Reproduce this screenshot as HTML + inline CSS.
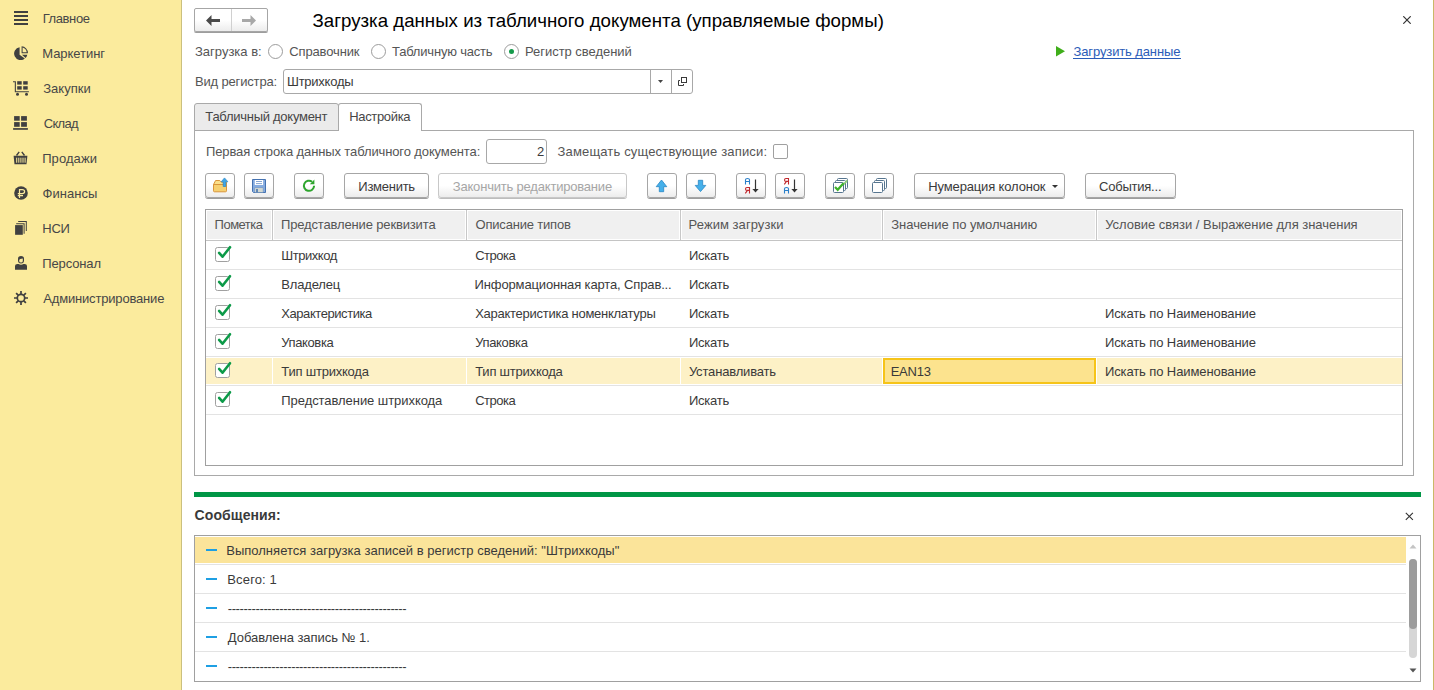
<!DOCTYPE html>
<html><head><meta charset="utf-8">
<style>
*{box-sizing:border-box;margin:0;padding:0}
html,body{width:1434px;height:690px;overflow:hidden;background:#fff}
body{position:relative;font-family:"Liberation Sans",sans-serif;font-size:13px;line-height:15px;color:#555}
.a{position:absolute}
.t{position:absolute;white-space:nowrap;font-size:13px;line-height:15px}
#side{position:absolute;left:0;top:0;width:181px;height:690px;background:#fbeb9d}
#sideb{position:absolute;left:181px;top:0;width:1px;height:690px;background:#cbc07e}
#rb{position:absolute;left:1433px;top:0;width:1px;height:690px;background:#c9b867}
.side .t{color:#474747}
.ico{position:absolute;width:24px;height:24px}
.btn{position:absolute;height:26px;border:1px solid #a6a6a6;border-radius:3px;background:linear-gradient(#fff 0%,#fff 50%,#ececec 100%);box-shadow:0 1px 0 #9d9d9d}
.btn.dis{border-color:#c8c8c8;box-shadow:0 1px 0 #bdbdbd}
.rad{position:absolute;width:15px;height:15px;border:1px solid #9c9c9c;border-radius:50%;background:#fff}
.sep{position:absolute;height:1px;background:#e3e3e3}
</style></head><body>
<div id="side"></div><div id="sideb"></div><div id="rb"></div>
<div class="side">
 <div class="t" style="left:42.7px;top:11px;letter-spacing:-0.400px">Главное</div>
 <div class="t" style="left:42.2px;top:46px;letter-spacing:-0.037px">Маркетинг</div>
 <div class="t" style="left:43.2px;top:81px;letter-spacing:0.033px">Закупки</div>
 <div class="t" style="left:43.7px;top:116px;letter-spacing:-0.675px">Склад</div>
 <div class="t" style="left:42.2px;top:151px;letter-spacing:0.083px">Продажи</div>
 <div class="t" style="left:42.6px;top:186px;letter-spacing:0.033px">Финансы</div>
 <div class="t" style="left:42.2px;top:221px;letter-spacing:-0.200px">НСИ</div>
 <div class="t" style="left:42.2px;top:256px;letter-spacing:-0.114px">Персонал</div>
 <div class="t" style="left:43.3px;top:291px;letter-spacing:-0.181px">Администрирование</div>
</div>

<svg class="a" style="left:14px;top:11px" width="14" height="14"><g fill="#404040"><rect x="0" y="0" width="14" height="2"/><rect x="0" y="4" width="14" height="2"/><rect x="0" y="8" width="14" height="2"/><rect x="0" y="12" width="14" height="2"/></g></svg>
<svg class="a" style="left:14px;top:46px" width="14" height="14" viewBox="0 0 14 14"><g fill="#404040">
<path d="M5.6,1.2 V8.8 L10.8,12.6 A6.5,6.5 0 1 1 5.6,1.2Z"/>
<path d="M8,8.8 H13.3 A6.4,6.4 0 0 1 11.6,12.1Z"/>
<path d="M7.6,0.3 V7.2 H13.9 A6.6,6.6 0 0 0 7.6,0.3Z M8.6,1.5 A5.5,5.5 0 0 1 12.7,6.2 H8.6Z" fill-rule="evenodd"/></g></svg>
<svg class="a" style="left:13px;top:81px" width="16" height="16" viewBox="0 0 16 16"><g fill="#404040">
<path d="M0,0.2 H2.9 V10.2 H15.9 V11.3 H1.8 V1.3 H0Z"/>
<rect x="4.2" y="0.2" width="4.5" height="3.4"/><rect x="10.2" y="0.2" width="4.5" height="3.4"/>
<rect x="4.2" y="5.2" width="4.5" height="3.4"/><rect x="10.2" y="5.2" width="4.5" height="3.4"/>
<circle cx="4.5" cy="13.3" r="1.5"/><circle cx="13.5" cy="13.3" r="1.5"/></g></svg>
<svg class="a" style="left:13px;top:116px" width="16" height="16" viewBox="0 0 16 16"><g fill="#404040">
<rect x="1.1" y="0.1" width="5.6" height="4.6"/><rect x="8.1" y="0.1" width="5.8" height="4.6"/>
<rect x="1.1" y="6.1" width="5.6" height="4.7"/><rect x="8.1" y="6.1" width="5.8" height="4.7"/>
<rect x="0.1" y="12.1" width="14.8" height="1.7"/></g></svg>
<svg class="a" style="left:13px;top:151px" width="16" height="16" viewBox="0 0 16 16"><g fill="none" stroke="#404040">
<path d="M3.5,4.5 L6.2,0.8 M11.5,4.5 L8.8,0.8" stroke-width="1.4"/>
<path d="M0.6,4.8 H14.4 L13.5,13.2 H1.5Z" fill="#404040" stroke="none"/></g>
<g fill="#fbeb9d"><rect x="3.2" y="6.7" width="1" height="5"/><rect x="5.3" y="6.7" width="1" height="5"/><rect x="7.4" y="6.7" width="1" height="5"/><rect x="9.5" y="6.7" width="1" height="5"/><rect x="11.6" y="6.7" width="1" height="5"/></g></svg>
<svg class="a" style="left:14px;top:186px" width="14" height="14" viewBox="0 0 14 14"><circle cx="7" cy="7" r="6.8" fill="#404040"/>
<path d="M5.5,12 V3.6 H8.2 Q10.6,3.6 10.6,5.6 Q10.6,7.6 8.2,7.6 H3.8 M3.8,9.6 H9" fill="none" stroke="#fbeb9d" stroke-width="1.2"/></svg>
<svg class="a" style="left:14px;top:221px" width="14" height="14" viewBox="0 0 14 14"><g fill="#404040">
<rect x="1.1" y="4.1" width="7.7" height="9.7"/>
<path d="M2.2,2.2 H10.6 V12.8 H9.6 V3.2 H2.2Z"/>
<path d="M4.2,0.1 H12.8 V9.9 H11.8 V1.1 H4.2Z"/></g></svg>
<svg class="a" style="left:14px;top:256px" width="14" height="14" viewBox="0 0 14 14"><g fill="#404040">
<path d="M4,2.5 Q4,0 7,0 Q10,0 10,2.5 V4.5 Q10,7.5 7,7.5 Q4,7.5 4,4.5Z"/>
<path d="M1,10 Q1,8 3.5,8 H4.5 Q7,9.5 9.5,8 H10.5 Q13,8 13,10 V13.8 H1Z"/></g>
<path d="M5.2,4.2 Q5.5,2.6 8.8,2.6 V5 Q8.8,6.5 7,6.5 Q5.2,6.5 5.2,5Z" fill="#fbeb9d"/></svg>
<svg class="a" style="left:14px;top:291px" width="14" height="14" viewBox="0 0 14 14"><g stroke="#404040" stroke-width="1.7" fill="none">
<circle cx="7" cy="7" r="3.7"/>
<path d="M7,0 V3 M7,11 V14 M0,7 H3 M11,7 H14 M2.1,2.1 L4.2,4.2 M9.8,9.8 L11.9,11.9 M11.9,2.1 L9.8,4.2 M4.2,9.8 L2.1,11.9"/></g></svg>

<svg class="a" style="left:1403px;top:16px" width="8" height="8"><path d="M0.3,0.3 L7.7,7.7 M7.7,0.3 L0.3,7.7" stroke="#333" stroke-width="1.2"/></svg>
<svg class="a" style="left:1056px;top:46px" width="10" height="11"><path d="M0,0 L9,5.3 L0,10.6Z" fill="#3fae1a"/></svg>


<!-- header -->
<div class="btn" style="left:194px;top:8px;width:74px;height:24px;border-radius:2px"></div>
<div class="a" style="left:231px;top:9px;width:1px;height:22px;background:#d0d0d0"></div>
<svg class="a" style="left:206px;top:15px" width="14" height="11" viewBox="0 0 14 11"><path d="M0,5.5 L5.5,0 V4 H14 V7 H5.5 V11Z" fill="#4a4a4a"/></svg>
<svg class="a" style="left:242px;top:15px" width="14" height="11" viewBox="0 0 14 11"><path d="M14,5.5 L8.5,0 V4 H0 V7 H8.5 V11Z" fill="#a8a8a8"/></svg>

<div class="t" style="left:312.5px;top:10px;font-size:18.67px;line-height:22px;color:#000;letter-spacing:0.014px">Загрузка данных из табличного документа (управляемые формы)</div>

<div class="t" style="left:195.0px;top:44px">Загрузка в:</div>
<div class="rad" style="left:268px;top:44px"></div>
<div class="t" style="left:289.3px;top:44px;letter-spacing:-0.144px">Справочник</div>
<div class="rad" style="left:371px;top:44px"></div>
<div class="t" style="left:392.0px;top:44px;letter-spacing:-0.193px">Табличную часть</div>
<div class="rad" style="left:504px;top:44px"></div>
<div class="a" style="left:509px;top:49px;width:5px;height:5px;border-radius:50%;background:#149a4a"></div>
<div class="t" style="left:525.0px;top:44px;letter-spacing:-0.033px">Регистр сведений</div>

<div class="t" style="left:1073.5px;top:44px;color:#2b5cb8;letter-spacing:-0.120px">Загрузить данные</div>
<div class="a" style="left:1073px;top:58px;width:108px;height:1px;background:#2b5cb8"></div>

<div class="t" style="left:195.0px;top:74px;letter-spacing:-0.167px">Вид регистра:</div>
<div class="a" style="left:283px;top:69px;width:410px;height:25px;border:1px solid #a8a8a8;border-radius:3px;background:#fff"></div>
<div class="t" style="left:287.0px;top:74px;color:#3a3a3a;letter-spacing:-0.250px">Штрихкоды</div>
<div class="a" style="left:650px;top:70px;width:1px;height:23px;background:#a8a8a8"></div>
<div class="a" style="left:671px;top:70px;width:1px;height:23px;background:#a8a8a8"></div>
<svg class="a" style="left:658px;top:80px" width="6" height="4"><path d="M0,0 H5 L2.5,3Z" fill="#444"/></svg>
<svg class="a" style="left:677px;top:76px" width="11" height="11" viewBox="0 0 11 11"><g fill="none" stroke="#3a3a3a" stroke-width="1"><rect x="4.5" y="1.5" width="5" height="5"/><path d="M3,4.5 H1.5 V9.5 H6.5 V8"/></g></svg>


<!-- tabs & panel -->
<div class="a" style="left:194px;top:130px;width:1220px;height:346px;border:1px solid #a9a9a9;border-top:1px solid #a9a9a9"></div>
<div class="a" style="left:194px;top:103px;width:145px;height:28px;border:1px solid #a9a9a9;border-radius:3px 3px 0 0;background:#ebebeb"></div>
<div class="a" style="left:338px;top:103px;width:84px;height:28px;border:1px solid #a9a9a9;border-bottom:none;border-radius:3px 3px 0 0;background:#fff"></div>
<div class="t" style="left:205.3px;top:109px;color:#464646;letter-spacing:-0.271px">Табличный документ</div>
<div class="t" style="left:349.3px;top:109px;color:#464646;letter-spacing:-0.350px">Настройка</div>

<div class="t" style="left:206.0px;top:144px;letter-spacing:-0.116px">Первая строка данных табличного документа:</div>
<div class="a" style="left:486px;top:139px;width:61px;height:25px;border:1px solid #a8a8a8;border-radius:3px;background:#fff"></div>
<div class="t" style="left:537px;top:144px;color:#3a3a3a">2</div>
<div class="t" style="left:557.5px;top:144px;letter-spacing:0.161px">Замещать существующие записи:</div>
<div class="a" style="left:773px;top:144px;width:15px;height:15px;border:1px solid #a0a0a0;border-radius:2px;background:#fff"></div>


<!-- toolbar -->
<div class="btn" style="left:205px;top:173px;width:30px;height:25px"><svg class="a" style="left:-1px;top:-1px" width="30" height="26" viewBox="0 0 30 26">
 <path d="M8.5,11.5 L10.6,7.5 H14.8 L16.4,9.2 H21.5 V11.5Z" fill="#fbe08a" stroke="#d9953a" stroke-width="1" stroke-linejoin="round"/>
 <path d="M8.5,11.5 H21.5 V17.8 Q21.5,18.8 20.5,18.8 H9.5 Q8.5,18.8 8.5,17.8Z" fill="#f6d070" stroke="#d9953a" stroke-width="1"/>
 <path d="M18.2,13.5 V8.8 H16.2 L19.5,4.9 L22.9,8.8 H20.8 V13.5Z" fill="#3ea6e8" stroke="#2a86c4" stroke-width="0.7"/>
</svg></div>
<div class="btn" style="left:244px;top:173px;width:30px;height:25px"><svg class="a" style="left:-1px;top:-1px" width="30" height="26" viewBox="0 0 30 26">
 <path d="M8.5,6.5 H21.5 V19.5 H9.5 L8.5,18.5Z" fill="#86ace0" stroke="#4572b0" stroke-width="1"/>
 <rect x="10.8" y="7" width="8.3" height="5" fill="#fff"/>
 <path d="M12,8.5 H18 M12,10.6 H18" stroke="#86a6d2" stroke-width="1"/>
 <rect x="10.8" y="14.8" width="8.3" height="4.5" fill="#d2d8d2" stroke="#6f8fb8" stroke-width="0.5"/>
 <rect x="12.2" y="16" width="1.6" height="3.2" fill="#4572b0"/>
</svg></div>
<div class="btn" style="left:294px;top:173px;width:30px;height:25px"><svg class="a" style="left:-1px;top:-1px" width="30" height="26" viewBox="0 0 30 26">
 <path d="M20.1,12.8 A5.1,5.1 0 1 1 18.1,8.7" fill="none" stroke="#2ea52e" stroke-width="2"/>
 <path d="M15.8,11.2 L20.4,6.6 L20.4,11.2Z" fill="#2ea52e"/>
</svg></div>
<div class="btn" style="left:344px;top:173px;width:85px;height:25px"></div>
<div class="t" style="left:358.3px;top:179px;color:#3a3a3a;letter-spacing:-0.263px">Изменить</div>
<div class="btn dis" style="left:438px;top:173px;width:189px;height:25px"></div>
<div class="t" style="left:452.8px;top:179px;color:#a6a6a6;letter-spacing:-0.196px">Закончить редактирование</div>

<div class="btn" style="left:647px;top:173px;width:30px;height:25px"><svg class="a" style="left:-1px;top:-1px" width="30" height="26" viewBox="0 0 30 26">
 <path d="M12.3,18.7 V13.7 H9.2 L14.5,7 L19.8,13.7 H16.7 V18.7Z" fill="#45b0ea" stroke="#2a86c4" stroke-width="0.8" stroke-linejoin="miter"/>
</svg></div>
<div class="btn" style="left:686px;top:173px;width:30px;height:25px"><svg class="a" style="left:-1px;top:-1px" width="30" height="26" viewBox="0 0 30 26">
 <path d="M12.3,7.3 V12.4 H9.2 L14.5,18.6 L19.8,12.4 H16.7 V7.3Z" fill="#45b0ea" stroke="#2a86c4" stroke-width="0.8"/>
</svg></div>
<div class="btn" style="left:736px;top:173px;width:30px;height:25px"><svg class="a" style="left:-1px;top:-1px" width="30" height="26" viewBox="0 0 30 26">
 <path d="M9.5,11.5 V6.8 Q9.5,5.5 11.5,5.5 Q13.5,5.5 13.5,6.8 V11.5 M9.5,8.5 H13.5" fill="none" stroke="#2a7fc9" stroke-width="1.1"/>
 <path d="M13.5,20.5 V14.5 H11 Q9.5,14.5 9.5,15.9 Q9.5,17.4 11,17.4 H13.5 M11.3,17.6 L9.3,20.3" fill="none" stroke="#c0282d" stroke-width="1.1"/>
 <path d="M19.5,6.5 V18" stroke="#333" stroke-width="1.2"/>
 <path d="M16.4,16 H22.6 L19.5,19.6Z" fill="#333"/>
</svg></div>
<div class="btn" style="left:775px;top:173px;width:30px;height:25px"><svg class="a" style="left:-1px;top:-1px" width="30" height="26" viewBox="0 0 30 26">
 <path d="M13.5,11.5 V5.5 H11 Q9.5,5.5 9.5,6.9 Q9.5,8.4 11,8.4 H13.5 M11.3,8.6 L9.3,11.3" fill="none" stroke="#c0282d" stroke-width="1.1"/>
 <path d="M9.5,20.5 V15.8 Q9.5,14.5 11.5,14.5 Q13.5,14.5 13.5,15.8 V20.5 M9.5,17.5 H13.5" fill="none" stroke="#2a7fc9" stroke-width="1.1"/>
 <path d="M19.5,6.5 V18" stroke="#333" stroke-width="1.2"/>
 <path d="M16.4,16 H22.6 L19.5,19.6Z" fill="#333"/>
</svg></div>
<div class="btn" style="left:825px;top:173px;width:30px;height:25px"><svg class="a" style="left:-1px;top:-1px" width="30" height="26" viewBox="0 0 30 26">
 <rect x="12.5" y="5.5" width="10" height="10" rx="1" fill="#fff" stroke="#56758f" stroke-width="1"/>
 <rect x="10.5" y="7.5" width="10" height="10" rx="1" fill="#fff" stroke="#56758f" stroke-width="1"/>
 <rect x="8.5" y="9.5" width="10" height="10" rx="1" fill="#fff" stroke="#56758f" stroke-width="1"/>
 <path d="M20.6,9.5 L22.3,7.2 M18.6,11.5 L20.3,9.2" stroke="#8fcf7a" stroke-width="1.6"/>
 <path d="M10,14 L12.7,16.8 L18.5,10.2" fill="none" stroke="#3db22a" stroke-width="2.2"/>
</svg></div>
<div class="btn" style="left:864px;top:173px;width:30px;height:25px"><svg class="a" style="left:-1px;top:-1px" width="30" height="26" viewBox="0 0 30 26">
 <rect x="12.5" y="5.5" width="10" height="10" rx="1" fill="#fff" stroke="#56758f" stroke-width="1"/>
 <rect x="10.5" y="7.5" width="10" height="10" rx="1" fill="#fff" stroke="#56758f" stroke-width="1"/>
 <rect x="8.5" y="9.5" width="10" height="10" rx="1" fill="#fff" stroke="#56758f" stroke-width="1"/>
</svg></div>
<div class="btn" style="left:914px;top:173px;width:151px;height:25px"></div>
<div class="t" style="left:928.3px;top:179px;color:#3a3a3a;letter-spacing:-0.144px">Нумерация колонок</div>
<svg class="a" style="left:1052px;top:185px" width="7" height="4"><path d="M0,0 H6 L3,3Z" fill="#333"/></svg>
<div class="btn" style="left:1085px;top:173px;width:91px;height:25px"></div>
<div class="t" style="left:1099.0px;top:179px;color:#3a3a3a;letter-spacing:-0.222px">События...</div>

<!-- table -->
<div class="a" style="left:205px;top:209px;width:1198px;height:257px;border:1px solid #a0a0a0;background:#fff"></div>
<div class="a" style="left:206px;top:210px;width:1196px;height:30px;background:#f0f0f0;border:1px solid #fff"></div>
<div class="a" style="left:206px;top:240px;width:1196px;height:1px;background:#c4c4c4"></div>
<div class="a" style="left:271px;top:210px;width:3px;height:30px;background:#fff;border-left:1px solid #fff;border-right:1px solid #fff"></div>
<div class="a" style="left:272px;top:210px;width:1px;height:30px;background:#c8c8c8"></div>
<div class="a" style="left:465px;top:210px;width:3px;height:30px;background:#fff;border-left:1px solid #fff;border-right:1px solid #fff"></div>
<div class="a" style="left:466px;top:210px;width:1px;height:30px;background:#c8c8c8"></div>
<div class="a" style="left:679px;top:210px;width:3px;height:30px;background:#fff;border-left:1px solid #fff;border-right:1px solid #fff"></div>
<div class="a" style="left:680px;top:210px;width:1px;height:30px;background:#c8c8c8"></div>
<div class="a" style="left:881px;top:210px;width:3px;height:30px;background:#fff;border-left:1px solid #fff;border-right:1px solid #fff"></div>
<div class="a" style="left:882px;top:210px;width:1px;height:30px;background:#c8c8c8"></div>
<div class="a" style="left:1095px;top:210px;width:3px;height:30px;background:#fff;border-left:1px solid #fff;border-right:1px solid #fff"></div>
<div class="a" style="left:1096px;top:210px;width:1px;height:30px;background:#c8c8c8"></div>
<div class="t" style="left:214.6px;top:217px;color:#555;letter-spacing:-0.517px">Пометка</div>
<div class="t" style="left:281.0px;top:217px;color:#555;letter-spacing:-0.150px">Представление реквизита</div>
<div class="t" style="left:475.5px;top:217px;color:#555;letter-spacing:-0.192px">Описание типов</div>
<div class="t" style="left:688.6px;top:217px;color:#555;letter-spacing:0.054px">Режим загрузки</div>
<div class="t" style="left:891.3px;top:217px;color:#555;letter-spacing:-0.045px">Значение по умолчанию</div>
<div class="t" style="left:1105.2px;top:217px;color:#555;letter-spacing:-0.022px">Условие связи / Выражение для значения</div>
<div class="sep" style="left:206px;top:269px;width:1196px"></div>
<svg class="a" style="left:215px;top:247px;overflow:visible" width="15" height="15"><rect x="0.5" y="0.5" width="14" height="14" rx="2" fill="#fff" stroke="#a0a0a0"/><path d="M4.1,5.9 L7.5,9.7 L15,0.2" fill="none" stroke="#0c9a48" stroke-width="2.6" stroke-linecap="round" stroke-linejoin="round"/></svg>
<div class="t" style="left:281.3px;top:248px;color:#3a3a3a;letter-spacing:-0.457px">Штрихкод</div>
<div class="t" style="left:475.2px;top:248px;color:#3a3a3a;letter-spacing:-0.500px">Строка</div>
<div class="t" style="left:688.9px;top:248px;color:#3a3a3a;letter-spacing:-0.240px">Искать</div>
<div class="sep" style="left:206px;top:298px;width:1196px"></div>
<svg class="a" style="left:215px;top:276px;overflow:visible" width="15" height="15"><rect x="0.5" y="0.5" width="14" height="14" rx="2" fill="#fff" stroke="#a0a0a0"/><path d="M4.1,5.9 L7.5,9.7 L15,0.2" fill="none" stroke="#0c9a48" stroke-width="2.6" stroke-linecap="round" stroke-linejoin="round"/></svg>
<div class="t" style="left:281.3px;top:277px;color:#3a3a3a;letter-spacing:-0.160px">Владелец</div>
<div class="t" style="left:474.6px;top:277px;color:#3a3a3a;letter-spacing:-0.136px">Информационная карта, Справ...</div>
<div class="t" style="left:688.9px;top:277px;color:#3a3a3a;letter-spacing:-0.240px">Искать</div>
<div class="sep" style="left:206px;top:327px;width:1196px"></div>
<svg class="a" style="left:215px;top:305px;overflow:visible" width="15" height="15"><rect x="0.5" y="0.5" width="14" height="14" rx="2" fill="#fff" stroke="#a0a0a0"/><path d="M4.1,5.9 L7.5,9.7 L15,0.2" fill="none" stroke="#0c9a48" stroke-width="2.6" stroke-linecap="round" stroke-linejoin="round"/></svg>
<div class="t" style="left:281.3px;top:306px;color:#3a3a3a;letter-spacing:-0.438px">Характеристика</div>
<div class="t" style="left:475.2px;top:306px;color:#3a3a3a;letter-spacing:-0.262px">Характеристика номенклатуры</div>
<div class="t" style="left:688.9px;top:306px;color:#3a3a3a;letter-spacing:-0.240px">Искать</div>
<div class="t" style="left:1104.9px;top:306px;color:#3a3a3a;letter-spacing:-0.100px">Искать по Наименование</div>
<div class="sep" style="left:206px;top:356px;width:1196px"></div>
<svg class="a" style="left:215px;top:334px;overflow:visible" width="15" height="15"><rect x="0.5" y="0.5" width="14" height="14" rx="2" fill="#fff" stroke="#a0a0a0"/><path d="M4.1,5.9 L7.5,9.7 L15,0.2" fill="none" stroke="#0c9a48" stroke-width="2.6" stroke-linecap="round" stroke-linejoin="round"/></svg>
<div class="t" style="left:281.3px;top:335px;color:#3a3a3a;letter-spacing:-0.386px">Упаковка</div>
<div class="t" style="left:475.2px;top:335px;color:#3a3a3a;letter-spacing:-0.343px">Упаковка</div>
<div class="t" style="left:688.9px;top:335px;color:#3a3a3a;letter-spacing:-0.240px">Искать</div>
<div class="t" style="left:1104.9px;top:335px;color:#3a3a3a;letter-spacing:-0.100px">Искать по Наименование</div>
<div class="sep" style="left:206px;top:385px;width:1196px"></div>
<div class="a" style="left:206px;top:358px;width:66px;height:26px;background:#fdf1c6"></div>
<div class="a" style="left:273px;top:358px;width:193px;height:26px;background:#fdf1c6"></div>
<div class="a" style="left:467px;top:358px;width:213px;height:26px;background:#fdf1c6"></div>
<div class="a" style="left:681px;top:358px;width:201px;height:26px;background:#fdf1c6"></div>
<div class="a" style="left:883px;top:358px;width:213px;height:26px;background:#fdf1c6"></div>
<div class="a" style="left:1097px;top:358px;width:305px;height:26px;background:#fdf1c6"></div>
<svg class="a" style="left:215px;top:363px;overflow:visible" width="15" height="15"><rect x="0.5" y="0.5" width="14" height="14" rx="2" fill="#fff" stroke="#a0a0a0"/><path d="M4.1,5.9 L7.5,9.7 L15,0.2" fill="none" stroke="#0c9a48" stroke-width="2.6" stroke-linecap="round" stroke-linejoin="round"/></svg>
<div class="t" style="left:281.3px;top:364px;color:#3a3a3a;letter-spacing:-0.217px">Тип штрихкода</div>
<div class="t" style="left:475.2px;top:364px;color:#3a3a3a;letter-spacing:-0.217px">Тип штрихкода</div>
<div class="t" style="left:688.9px;top:364px;color:#3a3a3a;letter-spacing:-0.167px">Устанавливать</div>
<div class="a" style="left:883px;top:358px;width:213px;height:26px;background:#fce38e;border:2px solid #f6c419"></div>
<div class="t" style="left:890.7px;top:364px;color:#3a3a3a;letter-spacing:-0.245px">EAN13</div>
<div class="t" style="left:1104.9px;top:364px;color:#3a3a3a;letter-spacing:-0.100px">Искать по Наименование</div>
<div class="sep" style="left:206px;top:414px;width:1196px"></div>
<svg class="a" style="left:215px;top:392px;overflow:visible" width="15" height="15"><rect x="0.5" y="0.5" width="14" height="14" rx="2" fill="#fff" stroke="#a0a0a0"/><path d="M4.1,5.9 L7.5,9.7 L15,0.2" fill="none" stroke="#0c9a48" stroke-width="2.6" stroke-linecap="round" stroke-linejoin="round"/></svg>
<div class="t" style="left:281.3px;top:393px;color:#3a3a3a;letter-spacing:-0.059px">Представление штрихкода</div>
<div class="t" style="left:475.2px;top:393px;color:#3a3a3a;letter-spacing:-0.500px">Строка</div>
<div class="t" style="left:688.9px;top:393px;color:#3a3a3a;letter-spacing:-0.240px">Искать</div>
<!-- messages -->
<div class="a" style="left:194px;top:492px;width:1227px;height:5px;background:#009646"></div>
<div class="t" style="left:194.6px;top:507px;font-weight:bold;font-size:14px;line-height:16px;color:#3a3a3a;letter-spacing:0.078px">Сообщения:</div>
<svg class="a" style="left:1405px;top:512px" width="9" height="9"><path d="M0.8,0.8 L7.9,7.9 M7.9,0.8 L0.8,7.9" stroke="#333" stroke-width="1.1"/></svg>
<div class="a" style="left:194px;top:535px;width:1227px;height:147px;border:1px solid #a0a0a0;background:#fff;overflow:hidden"></div>
<div class="a" style="left:195px;top:537px;width:1211px;height:26px;background:#fbe49a"></div>
<div class="sep" style="left:195px;top:564px;width:1211px"></div>
<div class="a" style="left:206px;top:549px;width:11px;height:2px;background:#1e9fe3"></div>
<div class="t" style="left:226.2px;top:543px;color:#3a3a3a;letter-spacing:0.020px">Выполняется загрузка записей в регистр сведений: "Штрихкоды"</div>
<div class="sep" style="left:195px;top:593px;width:1211px"></div>
<div class="a" style="left:206px;top:578px;width:11px;height:2px;background:#1e9fe3"></div>
<div class="t" style="left:227.3px;top:572px;color:#3a3a3a;letter-spacing:0.143px">Всего: 1</div>
<div class="sep" style="left:195px;top:622px;width:1211px"></div>
<div class="a" style="left:206px;top:607px;width:11px;height:2px;background:#1e9fe3"></div>
<div class="t" style="left:227.7px;top:601px;color:#3a3a3a;letter-spacing:-0.361px">---------------------------------------------</div>
<div class="sep" style="left:195px;top:651px;width:1211px"></div>
<div class="a" style="left:206px;top:636px;width:11px;height:2px;background:#1e9fe3"></div>
<div class="t" style="left:227.8px;top:630px;color:#3a3a3a;letter-spacing:-0.040px">Добавлена запись № 1.</div>
<div class="a" style="left:206px;top:665px;width:11px;height:2px;background:#1e9fe3"></div>
<div class="t" style="left:227.7px;top:659px;color:#3a3a3a;letter-spacing:-0.361px">---------------------------------------------</div>
<svg class="a" style="left:1406px;top:536px" width="14" height="145"><path d="M3.5,12.5 L7,8.5 L10.5,12.5Z" fill="#c4c4c4"/><rect x="3" y="23" width="8" height="99" rx="4" fill="#d6d6d6"/><rect x="3" y="23" width="8" height="70" rx="4" fill="#9c9c9c"/><path d="M3.5,132.5 H10.5 L7,136.5Z" fill="#555"/></svg>
</body></html>
